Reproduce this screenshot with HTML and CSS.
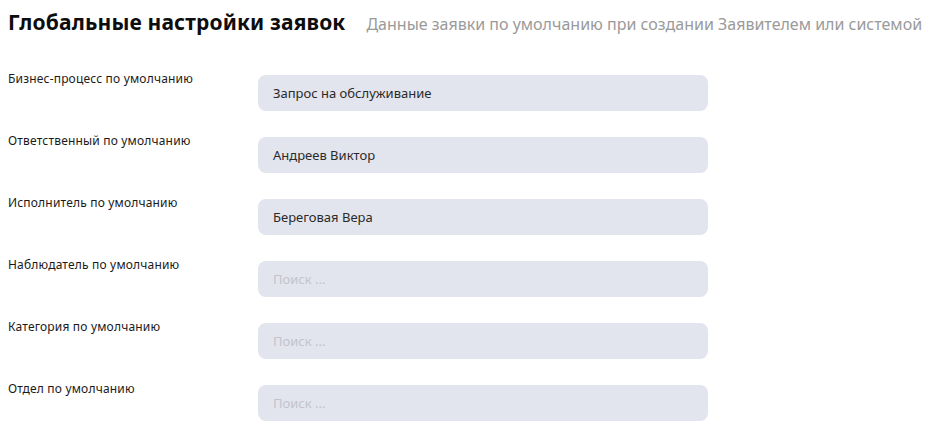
FILE: index.html
```html
<!DOCTYPE html>
<html lang="ru">
<head>
<meta charset="utf-8">
<link rel="stylesheet" href="styles.css">
</head>
<body>
<div class="page">
  <div class="header">
    <h1 class="title">Глобальные настройки заявок</h1>
    <span class="subtitle">Данные заявки по умолчанию при создании Заявителем или системой</span>
  </div>
  <div class="form">
    <div class="row">
      <div class="label">Бизнес-процесс по умолчанию</div>
      <div class="field">Запрос на обслуживание</div>
    </div>
    <div class="row">
      <div class="label">Ответственный по умолчанию</div>
      <div class="field">Андреев Виктор</div>
    </div>
    <div class="row">
      <div class="label">Исполнитель по умолчанию</div>
      <div class="field">Береговая Вера</div>
    </div>
    <div class="row">
      <div class="label">Наблюдатель по умолчанию</div>
      <div class="field placeholder">Поиск ...</div>
    </div>
    <div class="row">
      <div class="label">Категория по умолчанию</div>
      <div class="field placeholder">Поиск ...</div>
    </div>
    <div class="row">
      <div class="label">Отдел по умолчанию</div>
      <div class="field placeholder">Поиск ...</div>
    </div>
  </div>
</div>
</body>
</html>
```

FILE: styles.css
```css
html, body {
  margin: 0;
  padding: 0;
  background: #ffffff;
}
.page {
  padding: 4px 8px 0 8px;
  font-family: "Noto Sans", "Open Sans", sans-serif;
  color: #1a1a1a;
}
.header {
  display: flex;
  align-items: baseline;
  gap: 21px;
  height: 36px;
}
.title {
  margin: 0;
  font-size: 21px;
  font-weight: 700;
  color: #0d0d0d;
  line-height: 36px;
  letter-spacing: 0.15px;
}
.subtitle {
  font-size: 16px;
  color: #9a9a9a;
}
.form {
  display: flex;
  flex-direction: column;
  gap: 26px;
  padding-top: 35px;
}
.row {
  display: grid;
  grid-template-columns: 250px 450px;
  align-items: start;
}
.label {
  font-size: 12px;
  line-height: 16px;
  color: #1a1a1a;
  margin-top: -4px;
  letter-spacing: 0.18px;
}
.field {
  height: 36px;
  box-sizing: border-box;
  background: #e3e5ee;
  border-radius: 8px;
  padding: 0 15px;
  display: flex;
  align-items: center;
  font-size: 13px;
  color: #2a2a2a;
}
.field.placeholder {
  color: #c2c3cc;
}
```
